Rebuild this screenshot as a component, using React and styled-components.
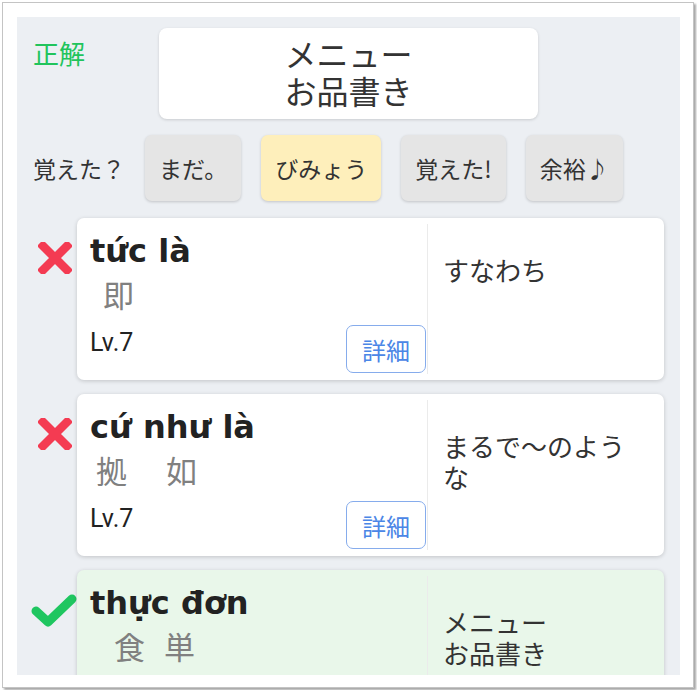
import React from "react";
import styled, { createGlobalStyle } from "styled-components";

const Global = createGlobalStyle`
  html, body { margin: 0; padding: 0; background: #ffffff; }
  body { font-family: Roboto, "Noto Sans CJK JP", sans-serif; }
  * { box-sizing: border-box; }
`;

const Frame = styled.div`
  margin: 2px;
  width: 692px;
  height: 686px;
  border: 1px solid #c4c4c4;
  box-shadow: 2px 2px 2px rgba(0, 0, 0, 0.35);
  background: #ffffff;
  padding: 14px 13px 12px 14px;
`;

const Panel = styled.div`
  height: 100%;
  background: #eceff3;
  padding: 11px 16px 0 16px;
  overflow: hidden;
  display: flex;
  flex-direction: column;
`;

const TopRow = styled.div`
  display: grid;
  grid-template-columns: 1fr 379px 1fr;
  align-items: start;
`;

const Result = styled.div`
  color: #21c45c;
  font-size: 26px;
  line-height: 32px;
  margin-top: 9px;
  font-family: "Noto Sans CJK JP", sans-serif;
`;

const AnswerBox = styled.div`
  background: #ffffff;
  border-radius: 8px;
  box-shadow: 0 1px 3px rgba(0, 0, 0, 0.15);
  height: 91px;
  padding-bottom: 4px;
  display: flex;
  align-items: center;
  justify-content: center;
  text-align: center;
  font-family: "Noto Sans CJK JP", sans-serif;
  font-size: 32px;
  line-height: 37px;
  color: #333333;
`;

const RateRow = styled.div`
  display: flex;
  align-items: center;
  gap: 20px;
  margin-top: 16px;
`;

const RateLabel = styled.div`
  font-family: "Noto Sans CJK JP", sans-serif;
  font-size: 23px;
  color: #333333;
`;

const RateButton = styled.button`
  height: 66px;
  padding: 0 14px;
  border: none;
  border-radius: 7px;
  background: ${(p) => (p.active ? "#feefbb" : "#e5e5e5")};
  box-shadow: 0 1px 3px rgba(0, 0, 0, 0.18);
  font-family: "Noto Sans CJK JP", sans-serif;
  font-size: 23px;
  color: #333333;
  cursor: pointer;
`;

const List = styled.div`
  display: flex;
  flex-direction: column;
  gap: 14px;
  margin-top: 17px;
`;

const Row = styled.div`
  display: grid;
  grid-template-columns: 44px 1fr;
  align-items: start;
`;

const Mark = styled.div`
  display: flex;
  justify-content: center;
  padding-top: 24px;
`;

const Card = styled.div`
  display: flex;
  background: ${(p) => (p.correct ? "#e9f7ea" : "#ffffff")};
  border-radius: 7px;
  box-shadow: 0 1px 4px rgba(0, 0, 0, 0.18);
  min-height: 162px;
`;

const WordCol = styled.div`
  flex: 0 0 350px;
  display: flex;
  flex-direction: column;
  padding: 12px 1px 7px 13px;
`;

const Word = styled.div`
  font-family: "DejaVu Sans", Roboto, sans-serif;
  font-weight: 700;
  font-size: 32px;
  line-height: 42px;
  color: #222222;
`;

const KanjiRow = styled.div`
  display: flex;
  gap: ${(p) => p.gap}px;
  padding-left: ${(p) => p.indent}px;
  padding-top: 3px;
  font-family: "Noto Sans CJK JP", sans-serif;
  font-size: 31px;
  line-height: 37px;
  color: #808080;
`;

const Footer = styled.div`
  display: flex;
  justify-content: space-between;
  align-items: flex-start;
  margin-top: auto;
  padding-top: 13px;
`;

const Level = styled.div`
  font-family: Roboto, sans-serif;
  font-size: 25px;
  line-height: 30px;
  color: #222222;
  margin-top: 3px;
`;

const DetailButton = styled.button`
  height: 48px;
  padding: 0 15px;
  background: transparent;
  border: 1px solid #86acec;
  border-radius: 7px;
  color: #4b86e6;
  font-family: "Noto Sans CJK JP", sans-serif;
  font-size: 24px;
  cursor: pointer;
`;

const MeaningCol = styled.div`
  flex: 1;
  margin: 6px 0;
  border-left: 1px solid #ebebeb;
  padding: 30px 15px 0 15px;
  font-family: "Noto Sans CJK JP", sans-serif;
  font-size: 26px;
  line-height: 31px;
  color: #333333;
`;

const Cross = () => (
  <svg width="34" height="32" viewBox="0 0 34 32">
    <path d="M5 4 L29 28 M29 4 L5 28" stroke="#f43b52" strokeWidth="8.5" strokeLinecap="square" fill="none" />
  </svg>
);

const Check = () => (
  <svg width="46" height="34" viewBox="0 0 46 34" style={{ marginLeft: "-2px" }}>
    <path d="M5 17 L17 28 L41 5" stroke="#1fc660" strokeWidth="9" strokeLinecap="round" strokeLinejoin="round" fill="none" />
  </svg>
);

const cards = [
  { word: "tức là", kanji: ["即"], indent: 13, gap: 0, meaning: ["すなわち"], correct: false, level: "Lv.7" },
  { word: "cứ như là", kanji: ["拠", "如"], indent: 6, gap: 39, meaning: ["まるで〜のような"], correct: false, level: "Lv.7" },
  { word: "thực đơn", kanji: ["食", "単"], indent: 24, gap: 19, meaning: ["メニュー", "お品書き"], correct: true, level: "Lv.1" },
];

export default function App() {
  return (
    <>
      <Global />
      <Frame>
        <Panel>
          <TopRow>
            <Result>正解</Result>
            <AnswerBox>
              メニュー
              <br />
              お品書き
            </AnswerBox>
            <div />
          </TopRow>
          <RateRow>
            <RateLabel>覚えた？</RateLabel>
            <RateButton>まだ。</RateButton>
            <RateButton active>びみょう</RateButton>
            <RateButton>覚えた!</RateButton>
            <RateButton>余裕♪</RateButton>
          </RateRow>
          <List>
            {cards.map((c, i) => (
              <Row key={i}>
                <Mark>{c.correct ? <Check /> : <Cross />}</Mark>
                <Card correct={c.correct}>
                  <WordCol>
                    <Word>{c.word}</Word>
                    <KanjiRow indent={c.indent} gap={c.gap}>
                      {c.kanji.map((k, j) => (
                        <span key={j}>{k}</span>
                      ))}
                    </KanjiRow>
                    <Footer>
                      <Level>{c.level}</Level>
                      <DetailButton>詳細</DetailButton>
                    </Footer>
                  </WordCol>
                  <MeaningCol>
                    {c.meaning.map((m, j) => (
                      <div key={j}>{m}</div>
                    ))}
                  </MeaningCol>
                </Card>
              </Row>
            ))}
          </List>
        </Panel>
      </Frame>
    </>
  );
}
